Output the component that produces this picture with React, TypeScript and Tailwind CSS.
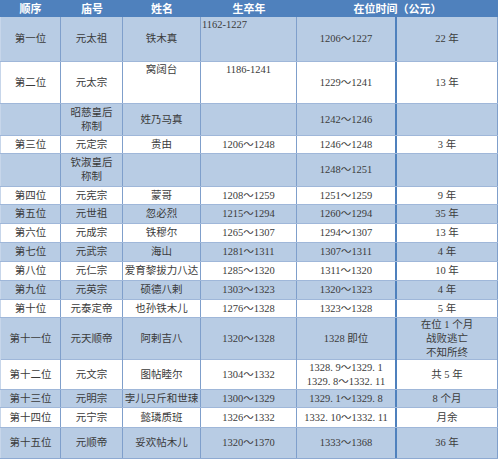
import React from "react";

type Align = "c" | "tl" | "tc";
type CellDef = { t?: React.ReactNode; a?: Align };
type RowDef = { h: number; blue: boolean; cells: CellDef[] };

const rows: RowDef[] = [
  { h: 44, blue: true, cells: [{ t: "第一位" }, { t: "元太祖" }, { t: "铁木真" }, { t: "1162-1227", a: "tl" }, { t: "1206～1227" }, { t: "22 年" }] },
  { h: 42, blue: false, cells: [{ t: "第二位" }, { t: "元太宗" }, { t: "窝阔台", a: "tc" }, { t: "1186-1241", a: "tc" }, { t: "1229～1241" }, { t: "13 年" }] },
  { h: 32, blue: true, cells: [{}, { t: <>昭慈皇后<br />称制</> }, { t: "姓乃马真" }, {}, { t: "1242～1246" }, {}] },
  { h: 18, blue: false, cells: [{ t: "第三位" }, { t: "元定宗" }, { t: "贵由" }, { t: "1206～1248" }, { t: "1246～1248" }, { t: "3 年" }] },
  { h: 33, blue: true, cells: [{}, { t: <>钦淑皇后<br />称制</> }, {}, {}, { t: "1248～1251" }, {}] },
  { h: 18, blue: false, cells: [{ t: "第四位" }, { t: "元宪宗" }, { t: "蒙哥" }, { t: "1208～1259" }, { t: "1251～1259" }, { t: "9 年" }] },
  { h: 19, blue: true, cells: [{ t: "第五位" }, { t: "元世祖" }, { t: "忽必烈" }, { t: "1215～1294" }, { t: "1260～1294" }, { t: "35 年" }] },
  { h: 19, blue: false, cells: [{ t: "第六位" }, { t: "元成宗" }, { t: "铁穆尔" }, { t: "1265～1307" }, { t: "1294～1307" }, { t: "13 年" }] },
  { h: 19, blue: true, cells: [{ t: "第七位" }, { t: "元武宗" }, { t: "海山" }, { t: "1281～1311" }, { t: "1307～1311" }, { t: "4 年" }] },
  { h: 19, blue: false, cells: [{ t: "第八位" }, { t: "元仁宗" }, { t: "爱育黎拔力八达" }, { t: "1285～1320" }, { t: "1311～1320" }, { t: "10 年" }] },
  { h: 19, blue: true, cells: [{ t: "第九位" }, { t: "元英宗" }, { t: "硕德八剌" }, { t: "1303～1323" }, { t: "1320～1323" }, { t: "4 年" }] },
  { h: 18, blue: false, cells: [{ t: "第十位" }, { t: "元泰定帝" }, { t: "也孙铁木儿" }, { t: "1276～1328" }, { t: "1323～1328" }, { t: "5 年" }] },
  { h: 42, blue: true, cells: [{ t: "第十一位" }, { t: "元天顺帝" }, { t: "阿剌吉八" }, { t: "1320～1328" }, { t: "1328 即位" }, { t: <>在位 1 个月<br />战败逃亡<br />不知所终</> }] },
  { h: 30, blue: false, cells: [{ t: "第十二位" }, { t: "元文宗" }, { t: "图帖睦尔" }, { t: "1304～1332" }, { t: <>1328. 9～1329. 1<br />1329. 8～1332. 11</> }, { t: "共 5 年" }] },
  { h: 18, blue: true, cells: [{ t: "第十三位" }, { t: "元明宗" }, { t: "孛儿只斤和世㻋" }, { t: "1300～1329" }, { t: "1329. 1～1329. 8" }, { t: "8 个月" }] },
  { h: 20, blue: false, cells: [{ t: "第十四位" }, { t: "元宁宗" }, { t: "懿璘质班" }, { t: "1326～1332" }, { t: "1332. 10～1332. 11" }, { t: "月余" }] },
  { h: 31, blue: true, cells: [{ t: "第十五位" }, { t: "元顺帝" }, { t: "妥欢帖木儿" }, { t: "1320～1370" }, { t: "1333～1368" }, { t: "36 年" }] },
];

const alignCls: Record<Align, string> = {
  c: "items-center justify-center text-center",
  tl: "items-start justify-start text-left pt-[1px] pl-[1px]",
  tc: "items-start justify-center text-center pt-[1px]",
};

export default function App() {
  return (
    <div className="w-[500px] h-[460px] bg-white overflow-hidden">
      <div className="w-[498px] border-b border-[#8eaad2]">
        <div
          className="grid grid-cols-[61px_62px_78px_96px_201px] h-[17px] bg-[#4f81bd] text-white font-bold text-[11px] leading-[17px]"
          style={{ fontFamily: '"Noto Sans CJK SC", sans-serif' }}
        >
          <div className="text-center">顺序</div>
          <div className="text-center">庙号</div>
          <div className="text-center">姓名</div>
          <div className="text-center">生卒年</div>
          <div className="text-center">在位时间（公元）</div>
        </div>
        {rows.map((r, i) => (
          <div
            key={i}
            className={`grid grid-cols-[61px_62px_78px_96px_100px_101px] text-[10.5px] leading-[14px] text-[#3b3b3b] ${
              r.blue ? "bg-[#b8cce4]" : "bg-white"
            } ${i > 0 ? "border-t border-[#9fb7d9]" : ""}`}
            style={{
              height: r.h,
              fontFamily: '"Liberation Serif", "Noto Sans CJK SC", serif',
            }}
          >
            {r.cells.map((c, j) => (
              <div
                key={j}
                className={`flex whitespace-nowrap ${alignCls[c.a ?? "c"]} ${
                  j === 4
                    ? "border-r-2 border-[#4f81bd]"
                    : j === 5
                    ? "border-r border-[#7f9fcb]"
                    : "border-r border-[#7f9fcb]"
                } ${j === 0 ? "border-l border-l-[#c7d6ea]" : ""}`}
              >
                {c.t ? <span>{c.t}</span> : null}
              </div>
            ))}
          </div>
        ))}
      </div>
    </div>
  );
}
